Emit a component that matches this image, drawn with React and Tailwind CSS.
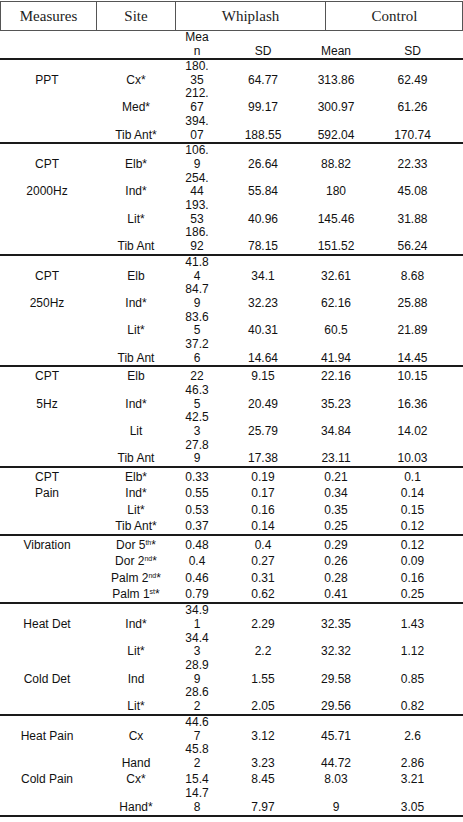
import React from 'react';

const sections = [
  [
    ['PPT', 'Cx*', '180.35', '64.77', '313.86', '62.49'],
    ['', 'Med*', '212.67', '99.17', '300.97', '61.26'],
    ['', 'Tib Ant*', '394.07', '188.55', '592.04', '170.74'],
  ],
  [
    ['CPT', 'Elb*', '106.9', '26.64', '88.82', '22.33'],
    ['2000Hz', 'Ind*', '254.44', '55.84', '180', '45.08'],
    ['', 'Lit*', '193.53', '40.96', '145.46', '31.88'],
    ['', 'Tib Ant', '186.92', '78.15', '151.52', '56.24'],
  ],
  [
    ['CPT', 'Elb', '41.84', '34.1', '32.61', '8.68'],
    ['250Hz', 'Ind*', '84.79', '32.23', '62.16', '25.88'],
    ['', 'Lit*', '83.65', '40.31', '60.5', '21.89'],
    ['', 'Tib Ant', '37.26', '14.64', '41.94', '14.45'],
  ],
  [
    ['CPT', 'Elb', '22', '9.15', '22.16', '10.15'],
    ['5Hz', 'Ind*', '46.35', '20.49', '35.23', '16.36'],
    ['', 'Lit', '42.53', '25.79', '34.84', '14.02'],
    ['', 'Tib Ant', '27.89', '17.38', '23.11', '10.03'],
  ],
  [
    ['CPT', 'Elb*', '0.33', '0.19', '0.21', '0.1'],
    ['Pain', 'Ind*', '0.55', '0.17', '0.34', '0.14'],
    ['', 'Lit*', '0.53', '0.16', '0.35', '0.15'],
    ['', 'Tib Ant*', '0.37', '0.14', '0.25', '0.12'],
  ],
  [
    ['Vibration', ['Dor 5', 'th'], '0.48', '0.4', '0.29', '0.12'],
    ['', ['Dor 2', 'nd'], '0.4', '0.27', '0.26', '0.09'],
    ['', ['Palm 2', 'nd'], '0.46', '0.31', '0.28', '0.16'],
    ['', ['Palm 1', 'st'], '0.79', '0.62', '0.41', '0.25'],
  ],
  [
    ['Heat Det', 'Ind*', '34.91', '2.29', '32.35', '1.43'],
    ['', 'Lit*', '34.43', '2.2', '32.32', '1.12'],
    ['Cold Det', 'Ind', '28.99', '1.55', '29.58', '0.85'],
    ['', 'Lit*', '28.62', '2.05', '29.56', '0.82'],
  ],
  [
    ['Heat Pain', 'Cx', '44.67', '3.12', '45.71', '2.6'],
    ['', 'Hand', '45.82', '3.23', '44.72', '2.86'],
    ['Cold Pain', 'Cx*', '15.4', '8.45', '8.03', '3.21'],
    ['', 'Hand*', '14.78', '7.97', '9', '3.05'],
  ],
];

const cols = 'grid grid-cols-[94px_84px_38px_94px_52px_101px] text-center';

function Site({ value }) {
  if (Array.isArray(value)) {
    return (
      <span>
        {value[0]}
        <sup className="text-[7px] -top-[4px]">{value[1]}</sup>*
      </span>
    );
  }
  return <span>{value}</span>;
}

function Row({ row }) {
  const [measure, site, mean, sd, cMean, cSd] = row;
  const single = mean.length <= 4; // fits on one line in the narrow Mean column
  return (
    <div className={`${cols} items-end ${single ? 'h-[16.5px]' : ''}`}>
      <div>{measure}</div>
      <div>
        <Site value={site} />
      </div>
      <div className="flex justify-center">
        <div className="w-[27px] break-all">{mean}</div>
      </div>
      <div>{sd}</div>
      <div>{cMean}</div>
      <div>{cSd}</div>
    </div>
  );
}

export default function App() {
  return (
    <div className="w-[463px] min-h-screen bg-white pt-[1px] text-[#111]">
      {/* group header */}
      <div className="grid grid-cols-[96px_79px_150px_137px] h-[30px] border border-[#555] text-[15px] text-[#222] font-['Liberation_Serif',serif]">
        <div className="flex items-center justify-center border-r border-[#555]">Measures</div>
        <div className="flex items-center justify-center border-r border-[#555]">Site</div>
        <div className="flex items-center justify-center border-r border-[#555]">Whiplash</div>
        <div className="flex items-center justify-center">Control</div>
      </div>

      <div className="font-['Liberation_Sans',Arial,sans-serif] text-[12px] leading-[13.7px]">
        <div className={`${cols} items-end h-[27px]`}>
          <div></div>
          <div></div>
          <div className="flex justify-center">
            <div className="w-[27px] break-all">Mean</div>
          </div>
          <div>SD</div>
          <div>Mean</div>
          <div>SD</div>
        </div>
        <div className="h-[2px] bg-[#1a1a1a]" />

        {sections.map((rows, i) => (
          <div key={i}>
            {rows.map((row, j) => (
              <Row key={j} row={row} />
            ))}
            <div className="h-[2px] bg-[#1a1a1a]" />
          </div>
        ))}
      </div>
    </div>
  );
}
